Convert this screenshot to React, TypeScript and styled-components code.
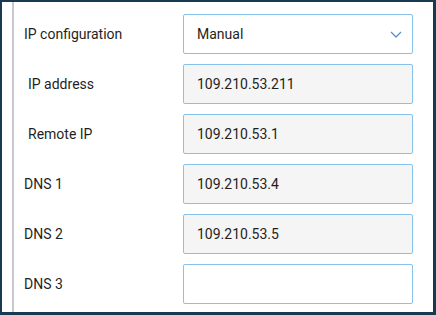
import React from "react";
import styled, { createGlobalStyle } from "styled-components";

const Global = createGlobalStyle`
  html, body { margin: 0; padding: 0; background: #ffffff; }
  body { font-family: Roboto, "Liberation Sans", sans-serif; }
`;

const Frame = styled.div`
  box-sizing: border-box;
  width: 436px;
  height: 315px;
  border-style: solid;
  border-color: #173a52;
  border-width: 2px 3px 3px 2px;
  background: #ffffff;
  display: flex;
  overflow: hidden;
`;

const Rail = styled.div`
  width: 2px;
  margin-left: 10px;
  background: #c9c9cd;
  flex: none;
`;

const Form = styled.div`
  display: flex;
  flex-direction: column;
  gap: 10px;
  padding: 12px 0 0 10px;
  flex: 1;
`;

const Row = styled.div`
  display: flex;
  align-items: center;
  height: 40px;
`;

const Label = styled.div<{ $indent?: boolean }>`
  width: 159px;
  padding-left: ${(p) => (p.$indent ? "4px" : "0")};
  box-sizing: border-box;
  font-size: 14px;
  color: #1f1f1f;
  margin-top: -1px;
`;

const Field = styled.div<{ $filled?: boolean }>`
  box-sizing: border-box;
  width: 230px;
  height: 40px;
  border: 1px solid #86c2ec;
  border-radius: 2px;
  background: ${(p) => (p.$filled ? "#f5f5f5" : "#ffffff")};
  display: flex;
  align-items: center;
  justify-content: space-between;
  padding: 0 10px 0 13px;
  font-size: 14px;
  color: #1f1f1f;
`;

const Chevron = () => (
  <svg width="12" height="7" viewBox="0 0 12 7" fill="none">
    <path d="M1 1l5 5 5-5" stroke="#5a8fd6" strokeWidth="1.3" />
  </svg>
);

const rows = [
  { label: "IP address", value: "109.210.53.211", indent: true },
  { label: "Remote IP", value: "109.210.53.1", indent: true },
  { label: "DNS 1", value: "109.210.53.4" },
  { label: "DNS 2", value: "109.210.53.5" },
];

export default function App() {
  return (
    <>
      <Global />
      <Frame>
        <Rail />
        <Form>
          <Row>
            <Label>IP configuration</Label>
            <Field>
              <span>Manual</span>
              <Chevron />
            </Field>
          </Row>
          {rows.map((r) => (
            <Row key={r.label}>
              <Label $indent={r.indent}>{r.label}</Label>
              <Field $filled>{r.value}</Field>
            </Row>
          ))}
          <Row>
            <Label>DNS 3</Label>
            <Field />
          </Row>
        </Form>
      </Frame>
    </>
  );
}
